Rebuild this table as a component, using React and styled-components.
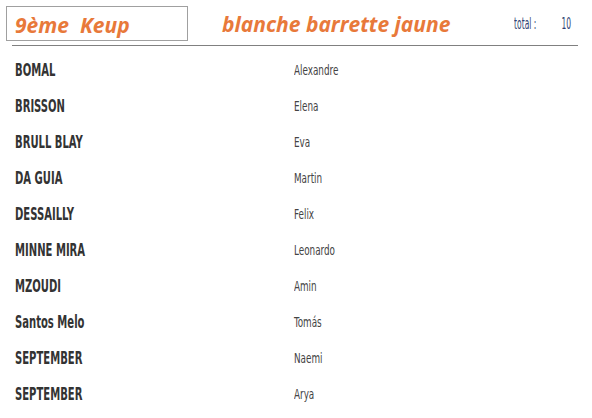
import React from 'react';
import styled, { createGlobalStyle } from 'styled-components';

const students = [
  { last: 'BOMAL', first: 'Alexandre' },
  { last: 'BRISSON', first: 'Elena' },
  { last: 'BRULL BLAY', first: 'Eva' },
  { last: 'DA GUIA', first: 'Martin' },
  { last: 'DESSAILLY', first: 'Felix' },
  { last: 'MINNE MIRA', first: 'Leonardo' },
  { last: 'MZOUDI', first: 'Amin' },
  { last: 'Santos Melo', first: 'Tomás' },
  { last: 'SEPTEMBER', first: 'Naemi' },
  { last: 'SEPTEMBER', first: 'Arya' },
];

const GlobalStyle = createGlobalStyle`
  html, body {
    margin: 0;
    padding: 0;
    background: #ffffff;
  }
`;

const Page = styled.div`
  width: 592px;
  height: 418px;
  background: #ffffff;
  overflow: hidden;
  font-family: 'DejaVu Sans Condensed', 'DejaVu Sans', sans-serif;
`;

const Header = styled.div`
  height: 45px;
  margin: 0 14px 0 12px;
  border-bottom: 1px solid #808080;
  display: flex;
  align-items: flex-start;
`;

const GradeBox = styled.div`
  box-sizing: border-box;
  width: 182px;
  height: 35px;
  margin: 6px 0 0 -6px;
  border: 1px solid #a0a0a0;
  padding: 6px 0 0 8px;
  color: #e8793a;
  font-family: 'Open Sans', 'Liberation Sans', sans-serif;
  font-style: italic;
  font-weight: 700;
  font-size: 21px;
  line-height: 24px;
  white-space: pre;
`;

const Belt = styled.div`
  margin: 12px 0 0 34px;
  color: #e8793a;
  font-family: 'Open Sans', 'Liberation Sans', sans-serif;
  font-style: italic;
  font-weight: 700;
  font-size: 21px;
  line-height: 24px;
`;

const Total = styled.div`
  margin: 16px 0 0 auto;
  display: flex;
  gap: 45px;
  padding-right: 12px;
  color: #2f3f72;
  font-size: 15px;
  line-height: 16px;
  transform: scaleX(0.56);
  transform-origin: right center;
`;

const List = styled.div`
  display: flex;
  flex-direction: column;
  padding-top: 5px;
`;

const Row = styled.div`
  height: 36px;
  display: grid;
  grid-template-columns: 279px 1fr;
  align-items: center;
  padding-left: 15px;
`;

const LastName = styled.span`
  color: #333333;
  font-weight: 700;
  font-size: 18px;
  display: inline-block;
  transform: scaleX(0.62);
  transform-origin: left center;
  white-space: nowrap;
`;

const FirstName = styled.span`
  color: #444444;
  font-size: 14px;
  display: inline-block;
  transform: scaleX(0.7);
  transform-origin: left center;
  white-space: nowrap;
`;

export default function App() {
  return (
    <Page>
      <GlobalStyle />
      <Header>
        <GradeBox>{'9ème  Keup'}</GradeBox>
        <Belt>blanche barrette jaune</Belt>
        <Total>
          <span>total :</span>
          <span>{students.length}</span>
        </Total>
      </Header>
      <List>
        {students.map((s, i) => (
          <Row key={i}>
            <span>
              <LastName>{s.last}</LastName>
            </span>
            <span>
              <FirstName>{s.first}</FirstName>
            </span>
          </Row>
        ))}
      </List>
    </Page>
  );
}
